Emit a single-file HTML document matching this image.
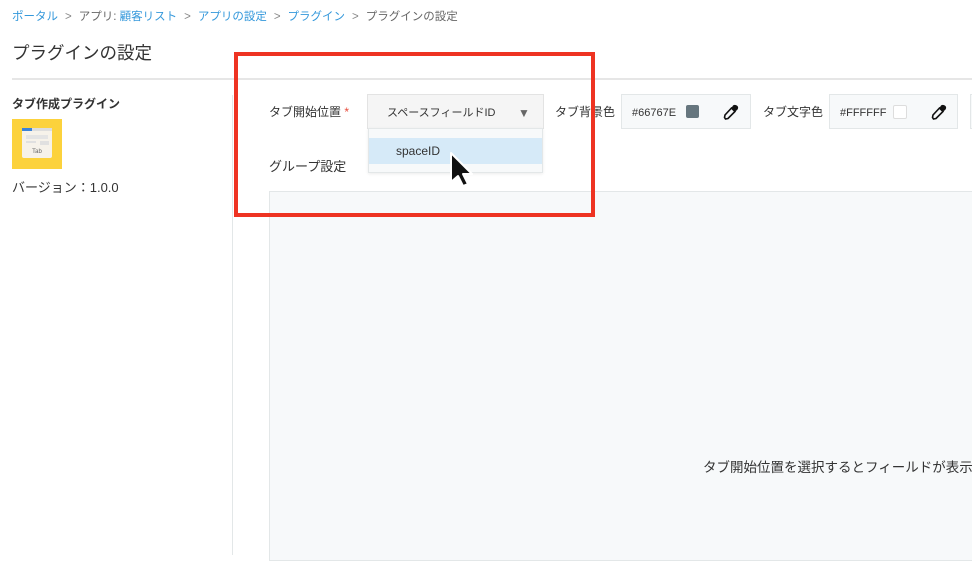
<!DOCTYPE html>
<html><head><meta charset="utf-8"><style>
*{margin:0;padding:0;box-sizing:border-box}
body{width:972px;height:555px;overflow:hidden;background:#fff;position:relative;font-family:"Liberation Sans","Noto Sans CJK JP",sans-serif;color:#333}
.abs{position:absolute;white-space:nowrap}
a{color:#3498db;text-decoration:none}
.bc{left:12px;top:8px;font-size:11.5px;color:#666}
.bc span.s{margin:0 7px;color:#888}
.field{position:absolute;top:94px;height:35px;background:#f7f9fa;border:1px solid #e3e7e8;font-size:12px;color:#333}
.t{position:absolute;top:2px;line-height:33px}
</style></head><body>
<div class="abs bc"><a>ポータル</a><span class="s">&gt;</span>アプリ: <a>顧客リスト</a><span class="s">&gt;</span><a>アプリの設定</a><span class="s">&gt;</span><a>プラグイン</a><span class="s">&gt;</span>プラグインの設定</div>
<div class="abs" style="left:12px;top:40px;font-size:17.5px;color:#333">プラグインの設定</div>
<div class="abs" style="left:12px;top:78px;width:960px;height:2px;background:#e6e6e6"></div>
<div class="abs" style="left:232px;top:95px;width:1px;height:460px;background:#e3e7e8"></div>
<div class="abs" style="left:12px;top:95px;font-size:12px;font-weight:bold;color:#333">タブ作成プラグイン</div>
<div class="abs" style="left:12px;top:119px;width:50px;height:50px;background:#fcd23c">
 <div style="position:absolute;left:10px;top:9px;width:30px;height:30px;background:#f6f2ea;border-radius:2px"></div>
 <div style="position:absolute;left:10px;top:9px;width:10px;height:3px;background:#3b82d8"></div>
 <div style="position:absolute;left:20px;top:9px;width:20px;height:3px;background:#ddd"></div>
 <div style="position:absolute;left:14px;top:16px;width:22px;height:4px;background:#e4e4e4"></div>
 <div style="position:absolute;left:14px;top:22px;width:10px;height:2px;background:#e0e0e0"></div>
 <div style="position:absolute;left:28px;top:22px;width:9px;height:4px;background:#e0e0e0"></div>
 <div style="position:absolute;left:10px;top:30px;width:30px;text-align:center;font-size:6px;color:#666">Tab</div>
</div>
<div class="abs" style="left:12px;top:177px;font-size:13px;color:#333">バージョン：1.0.0</div>

<div class="abs" style="left:269px;top:103px;font-size:12px">タブ開始位置 <span style="color:#e74c3c">*</span></div>
<div class="field" style="left:367px;width:177px;background:#f5f5f5;border-color:#e3e3e3"><span class="t" style="left:19px;font-size:11px">スペースフィールドID</span><span class="t" style="left:150px;font-size:12px;color:#666">▼</span></div>
<div class="abs" style="left:368px;top:128px;width:175px;height:45px;background:#f7f9fa;border:1px solid #e3e7e8;box-shadow:0 1px 3px rgba(0,0,0,.08)">
 <div style="position:absolute;left:0;top:9px;width:173px;height:26px;background:#d6eaf8;font-size:12px;line-height:26px;padding-left:27px">spaceID</div>
</div>
<svg class="abs" style="left:448px;top:151px" width="30" height="38" viewBox="0 0 30 38"><path d="M3 2 L3 31 L10 25 L15 35 L20 33 L15 23 L24 23 Z" fill="#111" stroke="#fff" stroke-width="2" stroke-linejoin="round"/></svg>
<div class="abs" style="left:269px;top:156px;font-size:13px">グループ設定</div>

<div class="abs" style="left:555px;top:103px;font-size:12px">タブ背景色</div>
<div class="field" style="left:621px;width:130px"><span class="t" style="left:10px;font-size:11px">#66767E</span><span class="abs" style="left:64px;top:10px;width:13px;height:13px;background:#66767e;border-radius:2px"></span>
<svg class="abs" style="left:101px;top:9px" width="16" height="16" viewBox="0 0 16 16"><path d="M10 2 L14 6 M8.5 4 L12 7.5 L5 14.5 L2.5 15 L1.5 13.5 L2 11 Z" fill="none" stroke="#111" stroke-width="1.6"/><path d="M10 1.5 Q12 0 14.5 2 Q16 4 14 6 L12 7.5 L8.5 4 Z" fill="#111"/></svg></div>
<div class="abs" style="left:763px;top:103px;font-size:12px">タブ文字色</div>
<div class="field" style="left:829px;width:129px"><span class="t" style="left:10px;font-size:11px">#FFFFFF</span><span class="abs" style="left:63px;top:10px;width:14px;height:14px;background:#fff;border:1px solid #ddd;border-radius:2px"></span>
<svg class="abs" style="left:101px;top:9px" width="16" height="16" viewBox="0 0 16 16"><path d="M10 2 L14 6 M8.5 4 L12 7.5 L5 14.5 L2.5 15 L1.5 13.5 L2 11 Z" fill="none" stroke="#111" stroke-width="1.6"/><path d="M10 1.5 Q12 0 14.5 2 Q16 4 14 6 L12 7.5 L8.5 4 Z" fill="#111"/></svg></div>
<div class="field" style="left:970px;width:10px"></div>

<div class="abs" style="left:269px;top:191px;width:710px;height:370px;background:#f7f9fa;border:1px solid #e3e7e8"></div>
<div class="abs" style="left:703px;top:456px;font-size:13.5px;color:#333">タブ開始位置を選択するとフィールドが表示</div>

<div class="abs" style="left:234px;top:52px;width:361px;height:165px;border:4px solid #ee3322"></div>
</body></html>
